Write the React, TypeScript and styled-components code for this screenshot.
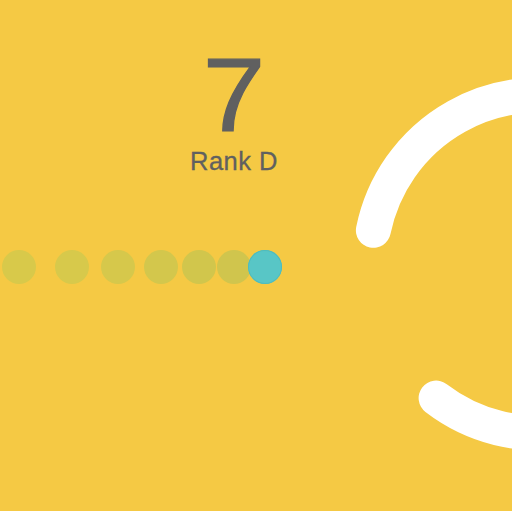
import React from "react";
import styled, { createGlobalStyle } from "styled-components";

const Global = createGlobalStyle`
  html, body { margin: 0; padding: 0; }
  body { background: #f5c944; }
`;

const Screen = styled.div`
  position: relative;
  width: 512px;
  height: 511px;
  overflow: hidden;
  background: #f5c944;
  font-family: "Liberation Sans", Arial, Helvetica, sans-serif;
  display: flex;
  flex-direction: column;
`;

const Header = styled.div`
  display: flex;
  flex-direction: column;
  align-items: center;
  padding: 55px 44px 0 0;
`;

const Score = styled.div`
  font-size: 104px;
  line-height: 80px;
  height: 80px;
  color: #606060;
  -webkit-text-stroke: 1.2px #606060;
  transform: scaleX(1.08);
`;

const Rank = styled.div`
  margin-top: 13.5px;
  font-size: 25.5px;
  line-height: 25px;
  letter-spacing: 0.5px;
  color: #606060;
  -webkit-text-stroke: 0.3px #606060;
`;

const Trail = styled.div`
  display: flex;
  align-items: center;
  margin-top: 76px;
  height: 34px;
`;

const Dot = styled.div<{ $gap: number; $active?: boolean; $tone: string }>`
  flex: none;
  width: 34px;
  height: 34px;
  border-radius: 50%;
  margin-left: ${(p) => p.$gap}px;
  background: ${(p) => (p.$active ? "#58c6c6" : p.$tone)};
  box-shadow: ${(p) => (p.$active ? "inset 0 0 0 1px #4fbcbd" : "none")};
  position: relative;
  z-index: ${(p) => (p.$active ? 2 : 1)};
`;

const Spinner = styled.svg`
  position: absolute;
  left: 0;
  top: 0;
  width: 512px;
  height: 511px;
  pointer-events: none;
`;

const dots = [
  { gap: 2, tone: "#d8c94a" },
  { gap: 19, tone: "#d7c94b" },
  { gap: 12, tone: "#d6c84b" },
  { gap: 8.5, tone: "#d3c74c" },
  { gap: 4.5, tone: "#d1c64c" },
  { gap: 0.5, tone: "#d0c54d" },
  { gap: -3, tone: "", active: true },
];

function arcPath(cx: number, cy: number, r: number, a0: number, a1: number) {
  const rad = (d: number) => (d * Math.PI) / 180;
  const x0 = cx + r * Math.cos(rad(a0));
  const y0 = cy + r * Math.sin(rad(a0));
  const x1 = cx + r * Math.cos(rad(a1));
  const y1 = cy + r * Math.sin(rad(a1));
  const sweep = (a1 - a0 + 360) % 360;
  const large = sweep > 180 ? 1 : 0;
  return `M ${x0} ${y0} A ${r} ${r} 0 ${large} 1 ${x1} ${y1}`;
}

export default function App() {
  return (
    <>
      <Global />
      <Screen>
        <Header>
          <Score>7</Score>
          <Rank>Rank D</Rank>
        </Header>
        <Trail>
          {dots.map((d, i) => (
            <Dot key={i} $gap={d.gap} $tone={d.tone} $active={d.active} />
          ))}
        </Trail>
        <Spinner viewBox="0 0 512 511">
          <path
            d={arcPath(539, 264, 169, 191.5, 127.5)}
            fill="none"
            stroke="#ffffff"
            strokeWidth={35}
            strokeLinecap="round"
          />
        </Spinner>
      </Screen>
    </>
  );
}
